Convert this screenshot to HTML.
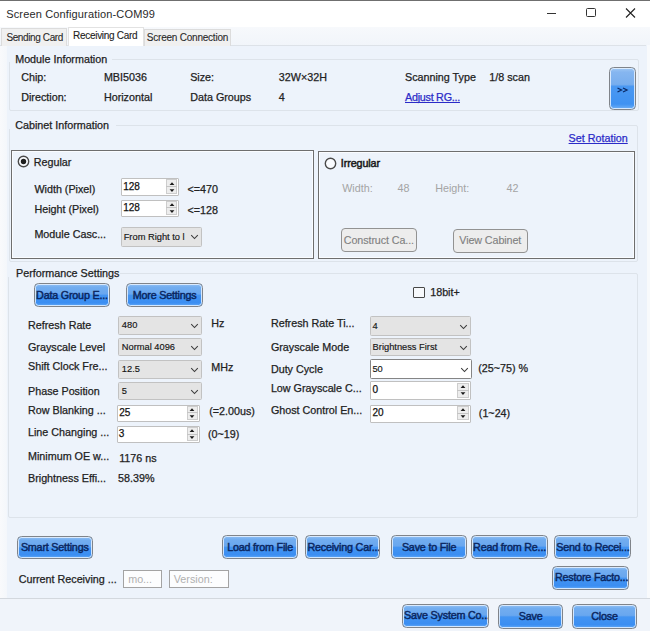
<!DOCTYPE html>
<html><head><meta charset="utf-8"><style>
html,body{margin:0;padding:0;}
body{width:650px;height:631px;position:relative;overflow:hidden;background:#fff;font-family:"Liberation Sans",sans-serif;}
.t{position:absolute;white-space:nowrap;-webkit-text-stroke:0.25px currentColor;}
.r{position:absolute;}
.r svg{display:block;}
.bb{position:absolute;box-sizing:border-box;border:1.8px solid #80848a;border-radius:4.5px;background:linear-gradient(#92c0f3 0%,#72adf0 15%,#69a7ef 45%,#4394f2 52%,#3b8ef2 86%,#64aaf6 100%);display:flex;align-items:center;justify-content:center;overflow:hidden;}
.bb .bi{position:absolute;left:0;top:0;right:0;bottom:0;border:1px solid rgba(232,242,255,0.85);border-radius:3.5px;}
.bb span{position:relative;top:-0.6px;color:#0a2660;white-space:nowrap;letter-spacing:-0.2px;font-weight:normal;-webkit-text-stroke:0.45px currentColor;}
.gb{position:absolute;box-sizing:border-box;border:1.5px solid #929292;border-radius:4px;background:#ededed;display:flex;align-items:center;justify-content:center;}
.gb span{position:relative;top:-0.8px;color:#808080;white-space:nowrap;letter-spacing:-0.1px;-webkit-text-stroke:0.12px currentColor;}
</style></head><body>
<div class="r" style="left:0.0px;top:0.0px;width:650.0px;height:1.0px;background:#6f6f6f;"></div>
<div class="t" style="left:6.2px;top:8.9px;font-size:11px;line-height:11px;color:#2a2a2a;-webkit-text-stroke:0;letter-spacing:0.15px;">Screen Configuration-COM99</div>
<div class="r" style="left:547.0px;top:12.6px;width:9.0px;height:1.2px;background:#333;"></div>
<div class="r" style="left:586.0px;top:8.3px;width:9.5px;height:9.2px;border:1.5px solid #333;border-radius:1.5px;box-sizing:border-box;"></div>
<svg class="r" style="left:625px;top:8px" width="11" height="10" viewBox="0 0 11 10"><path d="M1 0.5 L10 9.5 M10 0.5 L1 9.5" stroke="#222" stroke-width="1.1"/></svg>
<div class="r" style="left:0.0px;top:27.0px;width:650.0px;height:19.0px;background:linear-gradient(#f7f9fc,#f1f5fa);"></div>
<div class="r" style="left:0.0px;top:45.0px;width:650.0px;height:586.0px;background:#edf3fb;"></div>
<div class="r" style="left:647.0px;top:45.0px;width:3.0px;height:553.0px;background:#f8fafc;"></div>
<div class="r" style="left:0.0px;top:45.0px;width:646.0px;height:1.0px;background:#dde2e8;"></div>
<div class="r" style="left:0.0px;top:46.0px;width:7.0px;height:552.0px;background:linear-gradient(90deg,#f9fafc,#f4f7fb);"></div>
<div class="r" style="left:0.0px;top:597.5px;width:650.0px;height:1.0px;background:#d3d8de;"></div>
<div class="r" style="left:0.0px;top:598.5px;width:650.0px;height:32.5px;background:#f0f4fa;"></div>
<div class="r" style="left:1.0px;top:28.0px;width:66.0px;height:17.5px;background:#f0f0f0;border:1px solid #dcdcdc;border-bottom:none;box-sizing:border-box;"></div>
<div class="t" style="left:6.4px;top:33.0px;font-size:10px;line-height:10px;color:#2a2a2a;letter-spacing:-0.38px;-webkit-text-stroke:0.1px currentColor;">Sending Card</div>
<div class="r" style="left:67.5px;top:26.8px;width:76.0px;height:19.2px;background:#fff;border:1px solid #e2e2e2;border-bottom:none;box-sizing:border-box;"></div>
<div class="t" style="left:73.1px;top:31.4px;font-size:10px;line-height:10px;color:#222;letter-spacing:-0.3px;-webkit-text-stroke:0.1px currentColor;">Receiving Card</div>
<div class="r" style="left:143.5px;top:28.5px;width:87.1px;height:17.0px;background:#f0f0f0;border:1px solid #dcdcdc;border-bottom:none;box-sizing:border-box;"></div>
<div class="t" style="left:146.8px;top:32.7px;font-size:10px;line-height:10px;color:#2a2a2a;letter-spacing:-0.22px;-webkit-text-stroke:0.1px currentColor;">Screen Connection</div>
<div class="r" style="left:8.6px;top:58.7px;width:630.4px;height:52.5px;border:1px solid #dde3ea;border-radius:2px;box-sizing:border-box;"></div>
<div class="r" style="left:8.0px;top:55.0px;width:104.0px;height:7.0px;background:#edf3fb;"></div>
<div class="t" style="left:15.2px;top:53.9px;font-size:10.75px;line-height:10.75px;color:#222;">Module Information</div>
<div class="t" style="left:21.2px;top:72.1px;font-size:10.75px;line-height:10.75px;color:#222;">Chip:</div>
<div class="t" style="left:103.9px;top:72.1px;font-size:10.75px;line-height:10.75px;color:#222;">MBI5036</div>
<div class="t" style="left:190.2px;top:72.1px;font-size:10.75px;line-height:10.75px;color:#222;">Size:</div>
<div class="t" style="left:278.8px;top:72.1px;font-size:10.75px;line-height:10.75px;color:#222;">32W×32H</div>
<div class="t" style="left:405.0px;top:71.9px;font-size:10.75px;line-height:10.75px;color:#222;">Scanning Type</div>
<div class="t" style="left:489.3px;top:71.9px;font-size:10.75px;line-height:10.75px;color:#222;">1/8 scan</div>
<div class="t" style="left:21.2px;top:91.6px;font-size:10.75px;line-height:10.75px;color:#222;">Direction:</div>
<div class="t" style="left:103.9px;top:91.6px;font-size:10.75px;line-height:10.75px;color:#222;">Horizontal</div>
<div class="t" style="left:190.2px;top:92.3px;font-size:10.75px;line-height:10.75px;color:#222;">Data Groups</div>
<div class="t" style="left:278.8px;top:92.3px;font-size:10.75px;line-height:10.75px;color:#222;">4</div>
<div class="t" style="left:405.0px;top:91.9px;font-size:10.75px;line-height:10.75px;color:#2b2bc8;text-decoration:underline;text-decoration-skip-ink:none;letter-spacing:-0.25px;">Adjust RG...</div>
<div class="bb" style="left:609px;top:67.2px;width:26.6px;height:42.8px;background:linear-gradient(#a0c8f4 0%,#86b6f0 10%,#78aeee 40%,#4a98f2 45%,#3f92f2 88%,#70b0f6 100%);"><div class="bi"></div><svg style="position:relative;display:block;margin-top:2px" width="13" height="6" viewBox="0 0 13 6"><path d="M1.5 1 L5.5 3 L1.5 5 M7 1 L11 3 L7 5" fill="none" stroke="#0b2a66" stroke-width="1.3"/></svg></div>
<div class="r" style="left:8.6px;top:124.6px;width:629.4px;height:137.4px;border:1px solid #dde3ea;border-radius:2px;box-sizing:border-box;"></div>
<div class="r" style="left:8.0px;top:120.0px;width:108.0px;height:9.0px;background:#edf3fb;"></div>
<div class="t" style="left:15.2px;top:119.8px;font-size:10.75px;line-height:10.75px;color:#222;">Cabinet Information</div>
<div class="t" style="left:568.6px;top:133.2px;font-size:10.75px;line-height:10.75px;color:#2b2bc8;text-decoration:underline;text-decoration-skip-ink:none;letter-spacing:0px;">Set Rotation</div>
<div class="r" style="left:10.8px;top:150.0px;width:302.8px;height:108.8px;border:1.5px solid #6e6e6e;box-shadow:inset 0 0 0 1px #fafcff;box-sizing:border-box;"></div>
<svg class="r" style="left:16.6px;top:155.3px" width="13" height="13" viewBox="0 0 13 13"><circle cx="6.5" cy="6.5" r="5.2" fill="#f9fbfe" stroke="#4a4a4a" stroke-width="1.4"/><circle cx="6.5" cy="6.5" r="2.7" fill="#1e1e1e"/></svg>
<div class="t" style="left:33.7px;top:156.6px;font-size:10.75px;line-height:10.75px;color:#222;">Regular</div>
<div class="t" style="left:34.4px;top:183.6px;font-size:10.75px;line-height:10.75px;color:#222;">Width (Pixel)</div>
<div class="t" style="left:34.4px;top:203.6px;font-size:10.75px;line-height:10.75px;color:#222;">Height (Pixel)</div>
<div class="t" style="left:34.4px;top:229.1px;font-size:10.75px;line-height:10.75px;color:#222;">Module Casc...</div>
<div class="r" style="left:121.0px;top:178.2px;width:58.3px;height:18.3px;background:#fff;border:1px solid #c0c0c0;border-radius:1px;box-sizing:border-box;"></div>
<div class="r" style="left:165.8px;top:179.4px;width:11.5px;height:14.9px;background:#ededed;border:1px solid #cdcdcd;box-sizing:border-box;"></div>
<div class="r" style="left:165.8px;top:186.3px;width:11.5px;height:1.1px;background:#c4c4c4;"></div>
<svg class="r" style="left:168.6px;top:180.8px" width="6" height="12" viewBox="0 0 6 12"><path d="M0.6 4 L3 1.3 L5.4 4 Z M0.6 8.2 L5.4 8.2 L3 10.9 Z" fill="#1a1a1a"/></svg>
<div class="t" style="left:123.2px;top:182.0px;font-size:10px;line-height:10px;color:#111;">128</div>
<div class="t" style="left:187.5px;top:183.9px;font-size:10.75px;line-height:10.75px;color:#222;">&lt;=470</div>
<div class="r" style="left:121.0px;top:199.5px;width:58.3px;height:17.9px;background:#fff;border:1px solid #c0c0c0;border-radius:1px;box-sizing:border-box;"></div>
<div class="r" style="left:165.8px;top:200.7px;width:11.5px;height:14.5px;background:#ededed;border:1px solid #cdcdcd;box-sizing:border-box;"></div>
<div class="r" style="left:165.8px;top:207.4px;width:11.5px;height:1.1px;background:#c4c4c4;"></div>
<svg class="r" style="left:168.6px;top:201.9px" width="6" height="12" viewBox="0 0 6 12"><path d="M0.6 4 L3 1.3 L5.4 4 Z M0.6 8.2 L5.4 8.2 L3 10.9 Z" fill="#1a1a1a"/></svg>
<div class="t" style="left:123.2px;top:203.1px;font-size:10px;line-height:10px;color:#111;">128</div>
<div class="t" style="left:187.5px;top:204.6px;font-size:10.75px;line-height:10.75px;color:#222;">&lt;=128</div>
<div class="r" style="left:121.0px;top:227.0px;width:80.7px;height:19.5px;background:#e4e4e4;border:1px solid #c2c2c2;border-radius:1.5px;box-sizing:border-box;"></div>
<div class="t" style="left:123.7px;top:232.7px;font-size:9.3px;line-height:9.3px;color:#151515;-webkit-text-stroke:0.15px currentColor;">From Right to l</div>
<div class="r" style="left:189.7px;top:234.4px;width:9px;height:6px"><svg width="9" height="6" viewBox="0 0 9 6"><path d="M1.2 1.2 L4.5 4.5 L7.8 1.2" fill="none" stroke="#3a3a3a" stroke-width="1.05"/></svg></div>
<div class="r" style="left:318.2px;top:150.6px;width:317.2px;height:108.0px;border:1.5px solid #6e6e6e;box-shadow:inset 0 0 0 1px #fafcff;box-sizing:border-box;"></div>
<svg class="r" style="left:323.5px;top:156.7px" width="13" height="13" viewBox="0 0 13 13"><circle cx="6.5" cy="6.5" r="5.2" fill="#f9fbfe" stroke="#4a4a4a" stroke-width="1.4"/></svg>
<div class="t" style="left:340.8px;top:157.9px;font-size:10.75px;line-height:10.75px;color:#1a1a1a;-webkit-text-stroke:0.5px currentColor;letter-spacing:-0.1px;">Irregular</div>
<div class="t" style="left:342.2px;top:182.6px;font-size:10.75px;line-height:10.75px;color:#a4a4a4;-webkit-text-stroke:0;">Width:</div>
<div class="t" style="left:397.5px;top:182.6px;font-size:10.75px;line-height:10.75px;color:#a4a4a4;-webkit-text-stroke:0;">48</div>
<div class="t" style="left:435.2px;top:182.6px;font-size:10.75px;line-height:10.75px;color:#a4a4a4;-webkit-text-stroke:0;">Height:</div>
<div class="t" style="left:506.6px;top:182.6px;font-size:10.75px;line-height:10.75px;color:#a4a4a4;-webkit-text-stroke:0;">42</div>
<div class="gb" style="left:341.0px;top:228.3px;width:75.8px;height:24.1px;"><span style="font-size:10.75px">Construct Ca...</span></div>
<div class="gb" style="left:452.6px;top:228.6px;width:75.3px;height:24.1px;"><span style="font-size:10.75px">View Cabinet</span></div>
<div class="r" style="left:8.0px;top:272.7px;width:630.0px;height:245.1px;border:1px solid #dde3ea;border-radius:2px;box-sizing:border-box;"></div>
<div class="r" style="left:7.0px;top:268.0px;width:113.0px;height:9.0px;background:#edf3fb;"></div>
<div class="t" style="left:16.0px;top:267.6px;font-size:10.75px;line-height:10.75px;color:#222;">Performance Settings</div>
<div class="bb" style="left:33.6px;top:283.3px;width:76.0px;height:23.7px;justify-content:flex-start;padding-left:1.5px"><div class="bi"></div><span style="font-size:10.75px">Data Group E...</span></div>
<div class="bb" style="left:126.3px;top:283.3px;width:76.7px;height:23.7px;justify-content:center"><div class="bi"></div><span style="font-size:10.75px">More Settings</span></div>
<div class="r" style="left:412.8px;top:286.6px;width:12.2px;height:11.9px;background:#f7f9fc;border:1.5px solid #474747;border-radius:1px;box-sizing:border-box;"></div>
<div class="t" style="left:430.2px;top:286.8px;font-size:10.75px;line-height:10.75px;color:#222;">18bit+</div>
<div class="t" style="left:28.0px;top:320.1px;font-size:10.75px;line-height:10.75px;color:#222;">Refresh Rate</div>
<div class="t" style="left:28.0px;top:342.0px;font-size:10.75px;line-height:10.75px;color:#222;">Grayscale Level</div>
<div class="t" style="left:28.0px;top:360.6px;font-size:10.75px;line-height:10.75px;color:#222;">Shift Clock Fre...</div>
<div class="t" style="left:28.0px;top:385.6px;font-size:10.75px;line-height:10.75px;color:#222;">Phase Position</div>
<div class="t" style="left:28.0px;top:405.0px;font-size:10.75px;line-height:10.75px;color:#222;">Row Blanking ...</div>
<div class="t" style="left:28.0px;top:426.9px;font-size:10.75px;line-height:10.75px;color:#222;">Line Changing ...</div>
<div class="t" style="left:28.0px;top:450.6px;font-size:10.75px;line-height:10.75px;color:#222;">Minimum OE w...</div>
<div class="t" style="left:28.0px;top:472.6px;font-size:10.75px;line-height:10.75px;color:#222;">Brightness Effi...</div>
<div class="r" style="left:118.3px;top:315.6px;width:83.7px;height:19.1px;background:#e4e4e4;border:1px solid #c2c2c2;border-radius:1.5px;box-sizing:border-box;"></div>
<div class="t" style="left:121.8px;top:321.1px;font-size:9.3px;line-height:9.3px;color:#151515;-webkit-text-stroke:0.15px currentColor;">480</div>
<div class="r" style="left:190.0px;top:322.8px;width:9px;height:6px"><svg width="9" height="6" viewBox="0 0 9 6"><path d="M1.2 1.2 L4.5 4.5 L7.8 1.2" fill="none" stroke="#3a3a3a" stroke-width="1.05"/></svg></div>
<div class="r" style="left:118.3px;top:337.7px;width:83.7px;height:18.8px;background:#e4e4e4;border:1px solid #c2c2c2;border-radius:1.5px;box-sizing:border-box;"></div>
<div class="t" style="left:121.8px;top:343.0px;font-size:9.3px;line-height:9.3px;color:#151515;-webkit-text-stroke:0.15px currentColor;">Normal 4096</div>
<div class="r" style="left:190.0px;top:344.8px;width:9px;height:6px"><svg width="9" height="6" viewBox="0 0 9 6"><path d="M1.2 1.2 L4.5 4.5 L7.8 1.2" fill="none" stroke="#3a3a3a" stroke-width="1.05"/></svg></div>
<div class="r" style="left:118.3px;top:359.5px;width:83.7px;height:19.0px;background:#e4e4e4;border:1px solid #c2c2c2;border-radius:1.5px;box-sizing:border-box;"></div>
<div class="t" style="left:121.8px;top:364.9px;font-size:9.3px;line-height:9.3px;color:#151515;-webkit-text-stroke:0.15px currentColor;">12.5</div>
<div class="r" style="left:190.0px;top:366.7px;width:9px;height:6px"><svg width="9" height="6" viewBox="0 0 9 6"><path d="M1.2 1.2 L4.5 4.5 L7.8 1.2" fill="none" stroke="#3a3a3a" stroke-width="1.05"/></svg></div>
<div class="r" style="left:118.3px;top:381.8px;width:83.7px;height:18.6px;background:#e4e4e4;border:1px solid #c2c2c2;border-radius:1.5px;box-sizing:border-box;"></div>
<div class="t" style="left:121.8px;top:387.0px;font-size:9.3px;line-height:9.3px;color:#151515;-webkit-text-stroke:0.15px currentColor;">5</div>
<div class="r" style="left:190.0px;top:388.8px;width:9px;height:6px"><svg width="9" height="6" viewBox="0 0 9 6"><path d="M1.2 1.2 L4.5 4.5 L7.8 1.2" fill="none" stroke="#3a3a3a" stroke-width="1.05"/></svg></div>
<div class="r" style="left:117.0px;top:404.8px;width:83.0px;height:17.2px;background:#fff;border:1px solid #c0c0c0;border-radius:1px;box-sizing:border-box;"></div>
<div class="r" style="left:186.5px;top:406.0px;width:11.5px;height:13.8px;background:#ededed;border:1px solid #cdcdcd;box-sizing:border-box;"></div>
<div class="r" style="left:186.5px;top:412.4px;width:11.5px;height:1.1px;background:#c4c4c4;"></div>
<svg class="r" style="left:189.2px;top:406.9px" width="6" height="12" viewBox="0 0 6 12"><path d="M0.6 4 L3 1.3 L5.4 4 Z M0.6 8.2 L5.4 8.2 L3 10.9 Z" fill="#1a1a1a"/></svg>
<div class="t" style="left:119.2px;top:408.0px;font-size:10px;line-height:10px;color:#111;">25</div>
<div class="r" style="left:116.5px;top:426.0px;width:83.5px;height:17.2px;background:#fff;border:1px solid #c0c0c0;border-radius:1px;box-sizing:border-box;"></div>
<div class="r" style="left:186.5px;top:427.2px;width:11.5px;height:13.8px;background:#ededed;border:1px solid #cdcdcd;box-sizing:border-box;"></div>
<div class="r" style="left:186.5px;top:433.6px;width:11.5px;height:1.1px;background:#c4c4c4;"></div>
<svg class="r" style="left:189.2px;top:428.1px" width="6" height="12" viewBox="0 0 6 12"><path d="M0.6 4 L3 1.3 L5.4 4 Z M0.6 8.2 L5.4 8.2 L3 10.9 Z" fill="#1a1a1a"/></svg>
<div class="t" style="left:118.7px;top:429.2px;font-size:10px;line-height:10px;color:#111;">3</div>
<div class="t" style="left:211.2px;top:318.1px;font-size:10.75px;line-height:10.75px;color:#222;">Hz</div>
<div class="t" style="left:211.2px;top:361.6px;font-size:10.75px;line-height:10.75px;color:#222;">MHz</div>
<div class="t" style="left:209.2px;top:406.1px;font-size:10.75px;line-height:10.75px;color:#222;">(=2.00us)</div>
<div class="t" style="left:208.0px;top:429.1px;font-size:10.75px;line-height:10.75px;color:#222;">(0~19)</div>
<div class="t" style="left:119.2px;top:452.6px;font-size:10.75px;line-height:10.75px;color:#222;">1176 ns</div>
<div class="t" style="left:118.0px;top:472.6px;font-size:10.75px;line-height:10.75px;color:#222;">58.39%</div>
<div class="t" style="left:270.9px;top:317.6px;font-size:10.75px;line-height:10.75px;color:#222;">Refresh Rate Ti...</div>
<div class="t" style="left:270.9px;top:341.6px;font-size:10.75px;line-height:10.75px;color:#222;">Grayscale Mode</div>
<div class="t" style="left:270.9px;top:363.6px;font-size:10.75px;line-height:10.75px;color:#222;">Duty Cycle</div>
<div class="t" style="left:270.9px;top:382.5px;font-size:10.75px;line-height:10.75px;color:#222;">Low Grayscale C...</div>
<div class="t" style="left:270.9px;top:404.9px;font-size:10.75px;line-height:10.75px;color:#222;">Ghost Control En...</div>
<div class="r" style="left:370.4px;top:316.4px;width:100.9px;height:19.5px;background:#e4e4e4;border:1px solid #c2c2c2;border-radius:1.5px;box-sizing:border-box;"></div>
<div class="t" style="left:372.6px;top:322.1px;font-size:9.3px;line-height:9.3px;color:#151515;-webkit-text-stroke:0.15px currentColor;">4</div>
<div class="r" style="left:459.3px;top:323.8px;width:9px;height:6px"><svg width="9" height="6" viewBox="0 0 9 6"><path d="M1.2 1.2 L4.5 4.5 L7.8 1.2" fill="none" stroke="#3a3a3a" stroke-width="1.05"/></svg></div>
<div class="r" style="left:370.4px;top:337.6px;width:100.9px;height:18.8px;background:#e4e4e4;border:1px solid #c2c2c2;border-radius:1.5px;box-sizing:border-box;"></div>
<div class="t" style="left:372.6px;top:342.9px;font-size:9.3px;line-height:9.3px;color:#151515;-webkit-text-stroke:0.15px currentColor;">Brightness First</div>
<div class="r" style="left:459.3px;top:344.7px;width:9px;height:6px"><svg width="9" height="6" viewBox="0 0 9 6"><path d="M1.2 1.2 L4.5 4.5 L7.8 1.2" fill="none" stroke="#3a3a3a" stroke-width="1.05"/></svg></div>
<div class="r" style="left:370.2px;top:359.3px;width:101.8px;height:19.7px;background:#fff;border:1px solid #858585;border-radius:1.5px;box-sizing:border-box;"></div>
<div class="t" style="left:372.4px;top:365.1px;font-size:9.3px;line-height:9.3px;color:#151515;-webkit-text-stroke:0.15px currentColor;">50</div>
<div class="r" style="left:460.0px;top:366.8px;width:9px;height:6px"><svg width="9" height="6" viewBox="0 0 9 6"><path d="M1.2 1.2 L4.5 4.5 L7.8 1.2" fill="none" stroke="#3a3a3a" stroke-width="1.05"/></svg></div>
<div class="r" style="left:370.2px;top:381.3px;width:100.6px;height:18.5px;background:#fff;border:1px solid #c0c0c0;border-radius:1px;box-sizing:border-box;"></div>
<div class="r" style="left:457.3px;top:382.5px;width:11.5px;height:15.1px;background:#ededed;border:1px solid #cdcdcd;box-sizing:border-box;"></div>
<div class="r" style="left:457.3px;top:389.6px;width:11.5px;height:1.1px;background:#c4c4c4;"></div>
<svg class="r" style="left:460.1px;top:384.1px" width="6" height="12" viewBox="0 0 6 12"><path d="M0.6 4 L3 1.3 L5.4 4 Z M0.6 8.2 L5.4 8.2 L3 10.9 Z" fill="#1a1a1a"/></svg>
<div class="t" style="left:372.4px;top:385.2px;font-size:10px;line-height:10px;color:#111;">0</div>
<div class="r" style="left:370.2px;top:404.6px;width:100.6px;height:18.0px;background:#fff;border:1px solid #c0c0c0;border-radius:1px;box-sizing:border-box;"></div>
<div class="r" style="left:457.3px;top:405.8px;width:11.5px;height:14.6px;background:#ededed;border:1px solid #cdcdcd;box-sizing:border-box;"></div>
<div class="r" style="left:457.3px;top:412.6px;width:11.5px;height:1.1px;background:#c4c4c4;"></div>
<svg class="r" style="left:460.1px;top:407.1px" width="6" height="12" viewBox="0 0 6 12"><path d="M0.6 4 L3 1.3 L5.4 4 Z M0.6 8.2 L5.4 8.2 L3 10.9 Z" fill="#1a1a1a"/></svg>
<div class="t" style="left:372.4px;top:408.2px;font-size:10px;line-height:10px;color:#111;">20</div>
<div class="t" style="left:478.2px;top:363.3px;font-size:10.75px;line-height:10.75px;color:#222;">(25~75) %</div>
<div class="t" style="left:478.8px;top:407.6px;font-size:10.75px;line-height:10.75px;color:#222;">(1~24)</div>
<div class="bb" style="left:16.6px;top:535.9px;width:76.3px;height:23.6px;justify-content:center"><div class="bi"></div><span style="font-size:10.75px">Smart Settings</span></div>
<div class="bb" style="left:222.2px;top:535.3px;width:75.9px;height:23.7px;justify-content:center"><div class="bi"></div><span style="font-size:10.75px">Load from File</span></div>
<div class="bb" style="left:304.9px;top:535.3px;width:75.6px;height:23.7px;justify-content:flex-start;padding-left:1.5px"><div class="bi"></div><span style="font-size:10.75px">Receiving Car...</span></div>
<div class="bb" style="left:391.2px;top:535.3px;width:75.8px;height:23.7px;justify-content:center"><div class="bi"></div><span style="font-size:10.75px">Save to File</span></div>
<div class="bb" style="left:470.6px;top:535.3px;width:77.0px;height:23.7px;justify-content:flex-start;padding-left:1.5px"><div class="bi"></div><span style="font-size:10.75px">Read from Re...</span></div>
<div class="bb" style="left:553.7px;top:535.3px;width:76.9px;height:23.7px;justify-content:flex-start;padding-left:1.5px"><div class="bi"></div><span style="font-size:10.75px">Send to Recei...</span></div>
<div class="bb" style="left:552.4px;top:565.7px;width:76.6px;height:24.5px;justify-content:flex-start;padding-left:1.5px"><div class="bi"></div><span style="font-size:10.75px">Restore Facto...</span></div>
<div class="t" style="left:18.7px;top:573.9px;font-size:10.75px;line-height:10.75px;color:#222;">Current Receiving ...</div>
<div class="r" style="left:123.3px;top:570.3px;width:38.5px;height:17.7px;background:#fcfdfe;border:1.4px solid #a3a3a3;box-sizing:border-box;"></div>
<div class="t" style="left:128.2px;top:573.6px;font-size:10.75px;line-height:10.75px;color:#b0b0b0;-webkit-text-stroke:0;">mo...</div>
<div class="r" style="left:169.1px;top:570.3px;width:59.9px;height:17.7px;background:#fcfdfe;border:1.4px solid #a3a3a3;box-sizing:border-box;"></div>
<div class="t" style="left:173.8px;top:573.6px;font-size:10.75px;line-height:10.75px;color:#b0b0b0;-webkit-text-stroke:0;">Version:</div>
<div class="bb" style="left:401.6px;top:603.7px;width:87.0px;height:24.1px;justify-content:flex-start;padding-left:1.5px"><div class="bi"></div><span style="font-size:10.75px">Save System Co...</span></div>
<div class="bb" style="left:498.1px;top:604.2px;width:65.1px;height:24.4px;justify-content:center"><div class="bi"></div><span style="font-size:10.75px">Save</span></div>
<div class="bb" style="left:572.0px;top:604.2px;width:65.1px;height:24.4px;justify-content:center"><div class="bi"></div><span style="font-size:10.75px">Close</span></div>
</body></html>
